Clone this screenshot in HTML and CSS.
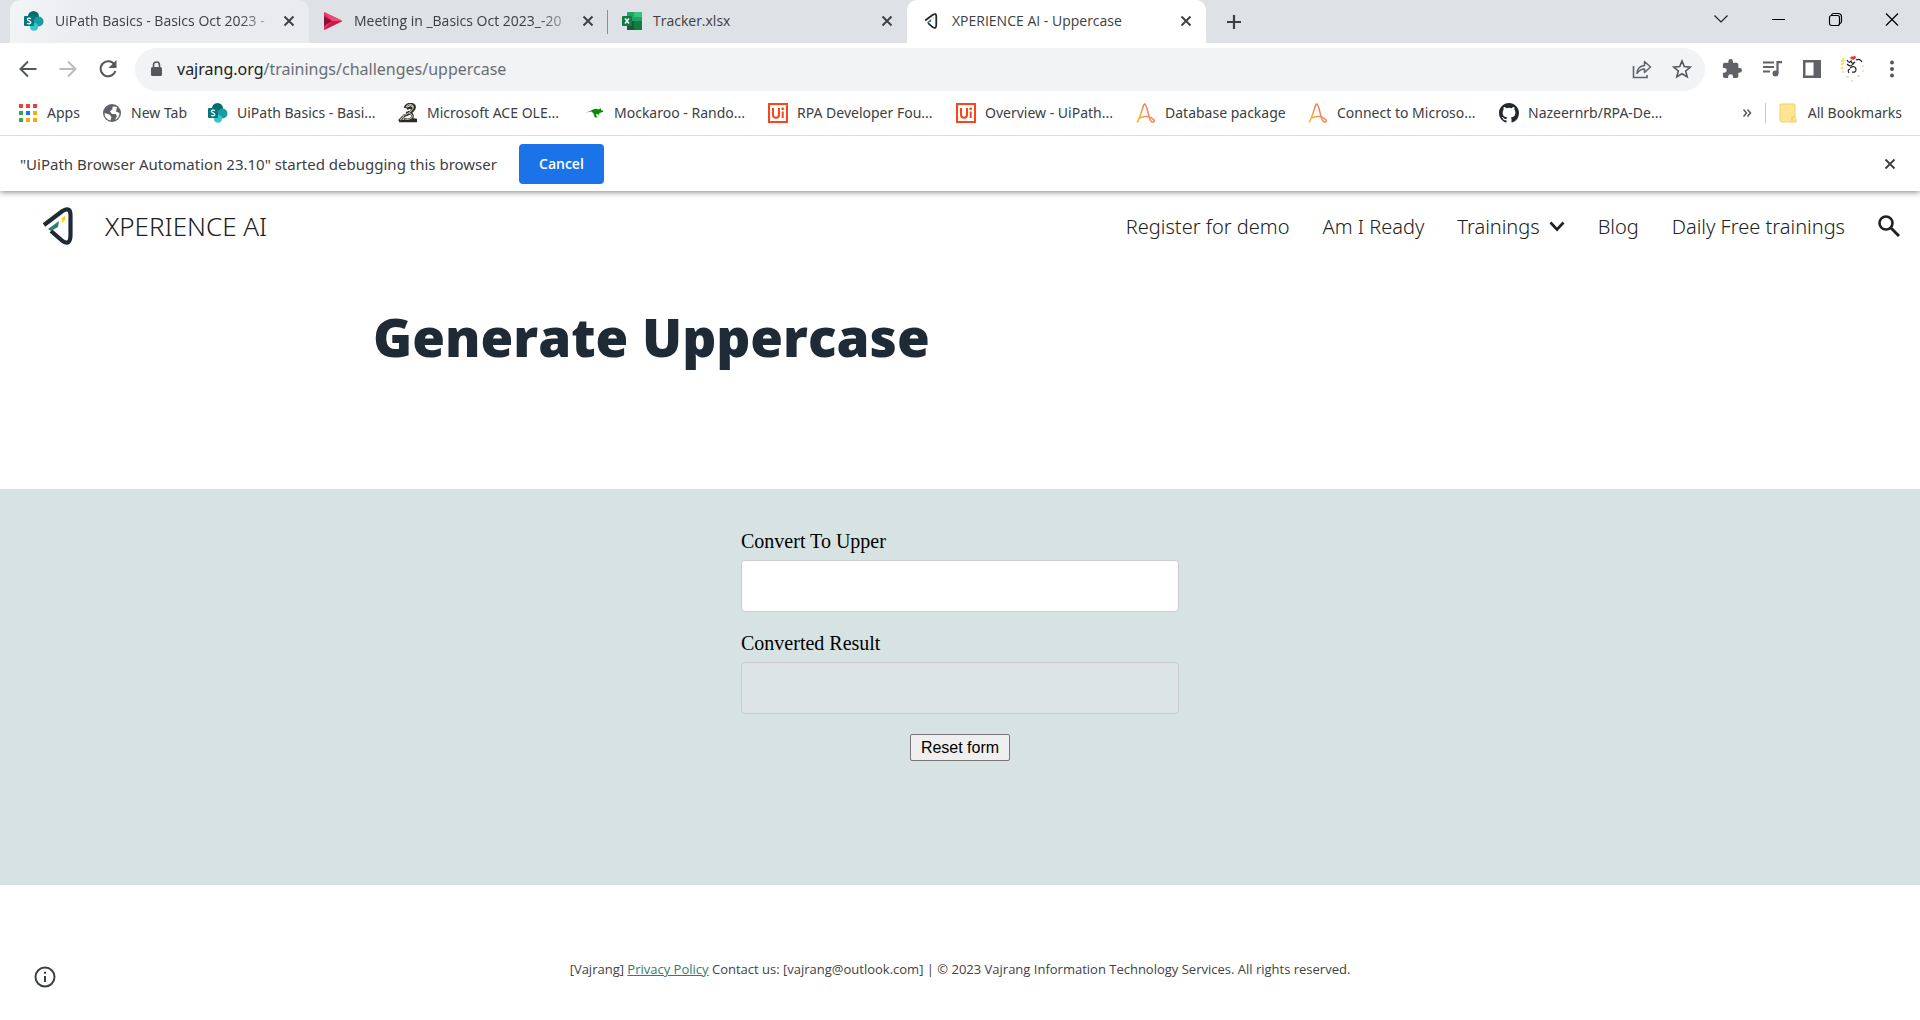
FILE: index.html
```html
<!DOCTYPE html>
<html lang="en">
<head>
<meta charset="utf-8">
<title>XPERIENCE AI - Uppercase</title>
<link rel="stylesheet" href="styles.css">
</head>
<body>
<svg class="defs" aria-hidden="true">
  <defs>
    <linearGradient id="accent" x1="0" y1="1" x2="1" y2="0"><stop offset="0" stop-color="#fdc300"/><stop offset=".5" stop-color="#f58a5b"/><stop offset="1" stop-color="#ee5a3c"/></linearGradient>
    <symbol id="sharepoint" viewBox="0 0 20 20"><circle cx="9.500" cy="5.500" r="5.500" fill="#036c70"/><circle cx="14.500" cy="10.500" r="5" fill="#1a9ba1"/><circle cx="10" cy="15.800" r="4" fill="#37c6d0"/><rect y="5" width="10" height="10" rx="1" fill="#03787c"/><path d="M6.900 7.600C5.500 6.800 3.300 7 3.400 8.500S6.800 9.900 6.800 11.500 4.200 13 3.100 12.200" fill="none" stroke="#fff" stroke-width="1.300"/></symbol>
    <symbol id="cross" viewBox="0 0 12 12"><path d="M1.500 1.500l9 9M10.500 1.500l-9 9" fill="none" stroke="currentColor" stroke-width="1.900"/></symbol>
    <symbol id="brand" viewBox="0 0 32 38"><path d="M2 18 20.500 4Q28.500-.5 28.500 8V28Q28.500 39 20.500 34L9 24" fill="none" stroke="#1f2a37" stroke-width="4.200" stroke-linejoin="round"/><path d="M6 22 17 14 16 20 9 24Z" fill="#2e7d73"/><path d="M20 11 23 9V13L20 16Z" fill="#fdd20a"/></symbol>
    <symbol id="uipath" viewBox="0 0 20 20"><path d="M1 1h18v18H1z" fill="#fff" stroke="#fa4616" stroke-width="2"/><path d="M5 5v6.500q0 3.300 3 3.300t3-3.300V5M14.700 8.500V15" fill="none" stroke="#fa4616" stroke-width="2"/><circle cx="14.700" cy="5.800" r="1.400" fill="#fa4616"/></symbol>
    <symbol id="actian" viewBox="0 0 20 20"><path d="M1 19.500C5 14 6.500 2 8.500 1 11 .5 12 13 14.500 17.500c1.600 2.500 5 1.500 3.500-.6-3-3.500-9.500-4.800-14.500-1.700" fill="none" stroke="url(#accent)" stroke-width="1.500"/></symbol>
  </defs>
</svg>

<header class="browser">
  <div class="tabs">
    <div class="tab tab--hover"><svg class="i20"><use href="#sharepoint"/></svg><span class="tab__title tab__title--fade">UiPath Basics - Basics Oct 2023 -</span><button class="plain" aria-label="Close tab"><svg class="i12"><use href="#cross"/></svg></button></div>
    <div class="tab tab--line"><svg class="i20" viewBox="0 0 20 20"><path d="M1 1 18 9q2 1 0 2L1 19Z" fill="#e8305f"/><path d="M1 1 19 10H9Z" fill="#ee4a76"/><path d="M1 19 9 10h10Z" fill="#c81c4d"/><path d="M1 5 9 10 1 15Z" fill="#8b1136"/></svg><span class="tab__title tab__title--fade">Meeting in _Basics Oct 2023_-20</span><button class="plain" aria-label="Close tab"><svg class="i12"><use href="#cross"/></svg></button></div>
    <div class="tab"><svg class="i20" viewBox="0 0 20 20"><rect x="5" y="1" width="15" height="18" rx="1" fill="#21a366"/><path d="M12 1h7q1 0 1 1v4h-8z" fill="#33c481"/><path d="M5 10h8v9H6q-1 0-1-1z" fill="#185c37"/><path d="M12 10h8v8q0 1-1 1h-7z" fill="#107c41"/><rect y="5" width="10" height="10" rx="1" fill="#107c41"/><path d="M3 7.500l4 5M7 7.500l-4 5" stroke="#fff" stroke-width="1.500"/></svg><span class="tab__title">Tracker.xlsx</span><button class="plain" aria-label="Close tab"><svg class="i12"><use href="#cross"/></svg></button></div>
    <div class="tab tab--active"><svg class="i20 tab__brand"><use href="#brand"/></svg><span class="tab__title">XPERIENCE AI - Uppercase</span><button class="plain" aria-label="Close tab"><svg class="i12"><use href="#cross"/></svg></button></div>
    <button class="plain tabs__new" aria-label="New tab"><svg class="i16" viewBox="0 0 16 16"><path d="M8 1v14M1 8h14" stroke="#3c4043" stroke-width="2.200"/></svg></button>
    <div class="window">
      <button class="plain" aria-label="Search tabs"><svg class="i16" viewBox="0 0 16 16"><path d="M1.500 4.500 8 11l6.500-6.500" fill="none" stroke="#222" stroke-width="1.200"/></svg></button>
      <button class="plain" aria-label="Minimize"><svg class="i16" viewBox="0 0 16 16"><path d="M2 8.500h13" stroke="#000"/></svg></button>
      <button class="plain" aria-label="Restore"><svg class="i16" viewBox="0 0 16 16"><rect x="2.500" y="4.500" width="10" height="10" rx="2" fill="none" stroke="#000" stroke-width="1.200"/><path d="M4.500 4Q5 2.500 7 2.500H11Q14.500 2.500 14.500 6v4.500Q14.500 12 13 12.500" fill="none" stroke="#000" stroke-width="1.200"/></svg></button>
      <button class="plain" aria-label="Close"><svg class="i16" viewBox="0 0 16 16"><path d="M2 2.500l12 12M14 2.500l-12 12" stroke="#000" stroke-width="1.200"/></svg></button>
    </div>
  </div>

  <div class="toolbar">
    <div class="toolbar__nav">
      <button class="plain" aria-label="Back"><svg class="i20" viewBox="0 0 20 20"><path d="M18.500 10H3M10 2.500 2.500 10l7.500 7.500" fill="none" stroke="#54575b" stroke-width="2"/></svg></button>
      <button class="plain" aria-label="Forward"><svg class="i20" viewBox="0 0 20 20"><path d="M1.500 10H17M10 2.500l7.500 7.500-7.500 7.500" fill="none" stroke="#babcbe" stroke-width="2"/></svg></button>
      <button class="plain" aria-label="Reload"><svg class="i20" viewBox="0 0 20 20"><path d="M16.300 5.500A7.500 7.500 0 1 0 17.300 12" fill="none" stroke="#54575b" stroke-width="2"/><path d="M18.500 1v8h-8z" fill="#54575b"/></svg></button>
    </div>
    <div class="omnibox">
      <svg class="i16" viewBox="0 0 16 16"><rect x="3" y="6" width="11" height="9" rx="1.500" fill="#54575b"/><path d="M5.500 6V4a3 3 0 0 1 6 0v2" fill="none" stroke="#54575b" stroke-width="1.600"/></svg>
      <span class="omnibox__url"><b>vajrang.org</b>/trainings/challenges/uppercase</span>
      <button class="plain" aria-label="Share"><svg class="i20" viewBox="0 0 20 20"><path d="M1.500 7v11.500h13.500V16" fill="none" stroke="#5f6368" stroke-width="1.600"/><path d="M5 14.500q.5-7.500 7.500-8V2.500L18.500 8l-6 5.500V10Q8 10 5 14.500z" fill="none" stroke="#5f6368" stroke-width="1.500" stroke-linejoin="round"/></svg></button>
      <button class="plain" aria-label="Bookmark this page"><svg class="i20" viewBox="0 0 20 20"><path d="M10 2l2.300 5.600 6 .5-4.600 3.900 1.500 5.900L10 14.700l-5.200 3.200L6.300 12 1.700 8.100l6-.5z" fill="none" stroke="#54575b" stroke-width="1.600"/></svg></button>
    </div>
    <div class="toolbar__tools">
      <button class="plain" aria-label="Extensions"><svg class="i20" viewBox="1 1 22 22"><path fill="#5f6368" d="M20.500 11H19V7a2 2 0 0 0-2-2h-4V3.500a2.500 2.500 0 0 0-5 0V5H4a2 2 0 0 0-2 2v3.800h1.500a2.700 2.700 0 0 1 0 5.400H2V20a2 2 0 0 0 2 2h3.800v-1.500a2.700 2.700 0 0 1 5.400 0V22H17a2 2 0 0 0 2-2v-4h1.500a2.500 2.500 0 0 0 0-5z"/></svg></button>
      <button class="plain" aria-label="Media"><svg class="i20" viewBox="0 0 20 20"><path d="M1 3.500h11M1 8h11M1 12.500h7" stroke="#5f6368" stroke-width="2"/><path d="M15.500 14V3.200H20" fill="none" stroke="#5f6368" stroke-width="2.200"/><circle cx="13.500" cy="14.500" r="3" fill="#5f6368"/></svg></button>
      <button class="plain" aria-label="Side panel"><svg class="i20" viewBox="0 0 20 20"><path fill="#5f6368" fill-rule="evenodd" d="M1 1h18v18H1zM3.500 3.500v13h8v-13z"/></svg></button>
      <button class="plain" aria-label="Profile"><svg class="i28" viewBox="0 0 28 28"><path d="M9 5q2 4 4 1 1 4 4 1M9 9q4 4 7-1M18 5q4-2 6 2M12 13q5-3 6 1 0 4-4 3M11 18q-2-3 1-4" fill="none" stroke="#222" stroke-width="1.200"/><path d="M12 3q2-3 3-1 2-3 3 1l-3 2z" fill="#ef2b2d"/><path d="M3 6h3M3 10l3-2M5 3l1 3M3 13h2" stroke="#f5e53a" stroke-width="1.800"/><path d="M4 17h2M8 22h3M13 26h2M19 21h3M24 16h2M24 11h2" stroke="#d6e3ba" stroke-width="1.500"/></svg></button>
      <button class="plain" aria-label="Menu"><svg class="i20" viewBox="0 0 20 20" fill="#54575b"><circle cx="10" cy="3.500" r="2"/><circle cx="10" cy="10" r="2"/><circle cx="10" cy="16.500" r="2"/></svg></button>
    </div>
  </div>

  <nav class="bookmarks" aria-label="Bookmarks">
    <a href="#"><svg class="i20" viewBox="0 0 20 20"><path d="M1 1h4v4H1zM8 1h4v4H8zM15 1h4v4h-4z" fill="#ea4335"/><path d="M1 8h4v4H1zM1 15h4v4H1z" fill="#34a853"/><path d="M8 8h4v4H8z" fill="#1a73e8"/><path d="M15 8h4v4h-4zM8 15h4v4H8zM15 15h4v4h-4z" fill="#fbaa05"/></svg>Apps</a>
    <a href="#"><svg class="i20" viewBox="0 0 20 20"><circle cx="10" cy="10" r="9" fill="#5f6368"/><path d="M11 3.500q-1 1-.5 2.500L8 8.500l2 2.500h3.500L15 13l-2 4Q17.500 15 17.500 10L14 8.500l1-4.500zM2.500 10l5 1.500 2 2.500-1 3.500Q2.500 16 2.500 10z" fill="#fff"/></svg>New Tab</a>
    <a href="#"><svg class="i20"><use href="#sharepoint"/></svg>UiPath Basics - Basi...</a>
    <a href="#"><svg class="i20" viewBox="0 0 20 20"><path d="M7 5q1-4 6-4 5 1 3 5-3 5-11 7M9 6q4-3 5 0 0 4-6 4M10 9q6 2 4 6-3 3-8 1M1 18h18M1 18l5-5M13 16l6 1" fill="none" stroke="#2d2a26" stroke-width="2.600"/><path d="M8 4q2-3 5-2.500 3 1 2 4-3 5-10 7M11 10q5 2 2.500 5-3 2-7 1M2 17l4-4" fill="none" stroke="#b5afa1" stroke-width="1.200"/></svg>Microsoft ACE OLE...</a>
    <a href="#"><svg class="i20" viewBox="0 0 20 20"><path d="M1 9.500Q5 8.500 8 6.500q3-1.500 6 0l1.500-1.500.7 2 2.300 1-1 1-3 1-.7 2.500-1-1.500-2 .5 1.500 3h-2.500l-1.300-4-2-2Q4 8.800 1 9.500z" fill="#0a8a0a"/></svg>Mockaroo - Rando...</a>
    <a href="#"><svg class="i20"><use href="#uipath"/></svg>RPA Developer Fou...</a>
    <a href="#"><svg class="i20"><use href="#uipath"/></svg>Overview - UiPath...</a>
    <a href="#"><svg class="i20"><use href="#actian"/></svg>Database package</a>
    <a href="#"><svg class="i20"><use href="#actian"/></svg>Connect to Microso...</a>
    <a href="#"><svg class="i20" viewBox="0 0 16 16"><path fill="#24292f" d="M8 0C3.580 0 0 3.580 0 8c0 3.540 2.290 6.530 5.470 7.590.4.070.55-.17.55-.38 0-.19-.01-.82-.01-1.490-2.010.37-2.530-.49-2.690-.94-.09-.23-.48-.94-.82-1.130-.28-.15-.68-.52-.01-.53.63-.01 1.080.58 1.230.82.72 1.210 1.870.87 2.330.66.07-.52.28-.87.51-1.070-1.780-.2-3.640-.89-3.640-3.950 0-.87.31-1.590.82-2.150-.08-.2-.36-1.020.08-2.120 0 0 .67-.21 2.200.82a7.600 7.600 0 0 1 4 0c1.530-1.040 2.200-.82 2.200-.82.44 1.100.16 1.920.08 2.120.51.56.82 1.270.82 2.150 0 3.070-1.870 3.750-3.650 3.950.29.25.54.73.54 1.480 0 1.070-.01 1.930-.01 2.200 0 .21.15.46.55.38A8 8 0 0 0 16 8c0-4.420-3.580-8-8-8z"/></svg>Nazeernrb/RPA-De...</a>
    <div class="bookmarks__end">
      <button class="plain" aria-label="More bookmarks"><svg class="i12" viewBox="0 0 12 12"><path d="M2.500 2.500l3 3.500-3 3.500M6.500 2.500l3 3.500-3 3.500" fill="none" stroke="#54575b" stroke-width="1.500"/></svg></button>
      <a class="bookmarks__all" href="#"><svg class="i20" viewBox="0 0 20 20"><path d="M4 1h12q1 0 1 1v13l1 1v3H4q-2 0-2-2V2q0-1 2-1z" fill="#ffe591" stroke="#f0cf62"/><path d="M14 18v-4h3" fill="none" stroke="#f0c740"/></svg>All Bookmarks</a>
    </div>
  </nav>

  <div class="infobar">
    <span>"UiPath Browser Automation 23.10" started debugging this browser</span>
    <button class="infobar__cancel">Cancel</button>
    <button class="plain infobar__close" aria-label="Dismiss"><svg class="i12"><use href="#cross"/></svg></button>
  </div>
</header>

<div class="site">
  <header class="site__header">
    <a class="site__home" href="#"><svg class="site__logo"><use href="#brand"/></svg>XPERIENCE AI</a>
    <nav class="menu" aria-label="Site">
      <a href="#">Register for demo</a>
      <a href="#">Am I Ready</a>
      <a href="#">Trainings <svg class="i16" viewBox="0 0 16 16"><path d="M1.500 4.500 8 11.500l6.500-7" fill="none" stroke="#212121" stroke-width="2.600"/></svg></a>
      <a href="#">Blog</a>
      <a href="#">Daily Free trainings</a>
      <button class="plain" aria-label="Search"><svg class="i22" viewBox="0 0 22 22"><circle cx="8" cy="8" r="6.500" fill="none" stroke="#212121" stroke-width="2.600"/><path d="M13 13l8 8" stroke="#212121" stroke-width="3"/></svg></button>
    </nav>
  </header>
  <main>
    <h1 class="title">Generate Uppercase</h1>
    <section class="band">
      <form class="form">
        <label for="source">Convert To Upper</label>
        <input id="source" type="text">
        <label for="result">Converted Result</label>
        <input id="result" type="text" disabled>
        <button class="form__reset" type="reset">Reset form</button>
      </form>
    </section>
  </main>
  <footer class="footer">
    <button class="plain footer__info" aria-label="Site information"><svg class="i22" viewBox="0 0 22 22"><circle cx="11" cy="11" r="9.500" fill="none" stroke="#3c4043" stroke-width="2"/><path d="M11 10v6M11 5.800v2" stroke="#3c4043" stroke-width="2"/></svg></button>
    <p>[Vajrang] <a href="#">Privacy Policy</a> Contact us: [vajrang@outlook.com] | © 2023 Vajrang Information Technology Services. All rights reserved.</p>
  </footer>
</div>
</body>
</html>
```
FILE: styles.css
```css
* { box-sizing: border-box; }
body { margin: 0; background: #fff; color: #3c4043; font-family: "Noto Sans", "Open Sans", sans-serif; font-size: 14px; }
a { color: inherit; text-decoration: none; }
svg { display: block; flex: none; }
.defs { position: absolute; width: 0; height: 0; }
.plain { display: flex; align-items: center; justify-content: center; padding: 0; border: 0; background: none; color: inherit; }
.i12 { width: 12px; height: 12px; }
.i16 { width: 16px; height: 16px; }
.i20 { width: 20px; height: 20px; }
.i22 { width: 22px; height: 22px; }
.i28 { width: 28px; height: 28px; }

.browser { position: relative; box-shadow: 0 1px 6px rgba(0, 0, 0, .5); }
.tabs { display: flex; height: 43px; padding-left: 10px; background: #dee1e6; }
.tab { display: flex; flex: 0 1 299px; min-width: 0; align-items: center; gap: 11px; padding: 0 14px 2px; border-radius: 10px 10px 0 0; font-family: "Open Sans", sans-serif; }
.tab--hover { background: linear-gradient(100deg, #f3f4f6, #e9ebee 30%); }
.tab--active { background: #fff; }
.tab--line { border-radius: 0; background: linear-gradient(#8c9095, #8c9095) right center / 1px 24px no-repeat; }
.tab__title { flex: 1; white-space: nowrap; }
.tab__title--fade { -webkit-mask-image: linear-gradient(90deg, #000 85%, rgba(0, 0, 0, .2)); mask-image: linear-gradient(90deg, #000 85%, rgba(0, 0, 0, .2)); }
.tab__brand { padding: 2px; }
.tabs__new { margin-left: 20px; }
.window { display: flex; margin-left: auto; height: 37px; }
.window button { width: 57px; }

.toolbar { display: flex; align-items: center; height: 51px; padding: 1px 18px 0; }
.toolbar__nav { display: flex; gap: 20px; width: 117px; }
.omnibox { display: flex; flex: 1; align-items: center; gap: 13px; height: 43px; padding: 0 13px; border-radius: 22px; background: #f1f3f4; }
.omnibox__url { flex: 1; color: #6a6e73; font-size: 16px; }
.omnibox__url b { color: #202124; font-weight: 400; }
.omnibox button + button { margin-left: 7px; }
.toolbar__tools { display: flex; align-items: center; gap: 20px; padding-left: 17px; }
.toolbar__tools button { width: 20px; }

.bookmarks { display: grid; grid-template-columns: 84px 106px 190px 187px 183px 188px 180px 172px 191px 190px 1fr; align-items: center; height: 42px; padding: 0 18px 4px; border-bottom: 1px solid #dadce0; white-space: nowrap; }
.bookmarks a { display: flex; align-items: center; gap: 9px; }
.bookmarks__end { display: flex; justify-content: flex-end; gap: 12px; }
.bookmarks .bookmarks__all { gap: 10px; padding-left: 12px; border-left: 1px solid #c6c9cd; }

.infobar { display: flex; align-items: center; gap: 22px; height: 55px; padding: 0 24px 0 20px; font-size: 15px; }
.infobar__cancel { width: 85px; height: 40px; border: 0; border-radius: 4px; background: #1a73e8; color: #fff; font: 600 14px "Open Sans", sans-serif; }
.infobar__close { margin-left: auto; }

.site { color: #212121; font-family: "Open Sans", sans-serif; }
.site__header { display: flex; align-items: center; justify-content: space-between; height: 70px; padding: 0 20px 0 42px; font-family: "Noto Sans", sans-serif; font-weight: 300; }
.site__home { display: flex; align-items: center; gap: 31px; font-size: 26px; }
.site__logo { width: 32px; height: 38px; }
.menu { display: flex; align-items: center; gap: 33px; font-size: 20px; }
.menu a { display: flex; align-items: center; gap: 9px; }
.title { width: 1174px; max-width: 100%; margin: 0 auto; padding: 36px 0 112px; color: #1f2a37; font: 800 53px/80px "Open Sans", sans-serif; }
.band { display: flex; justify-content: center; padding: 40px 0 124px; background: #d7e3e2; }
.form { display: flex; flex-direction: column; width: 438px; font: 20px/24px "Liberation Serif", serif; color: #000; }
.form label { margin-bottom: 7px; }
.form input { height: 52px; margin-bottom: 19px; padding: 0 12px; border: 1px solid #ccc; border-radius: 4px; background: #fff; font: inherit; }
.form input:disabled { background: #dce4e5; }
.form__reset { align-self: center; width: 100px; height: 27px; margin-top: 1px; padding: 0; border: 1px solid #767676; border-radius: 2px; background: #efefef; color: #000; font: 16px "Liberation Sans", sans-serif; }
.footer { position: relative; display: flex; justify-content: center; padding: 74px 0 40px; font-size: 13px; line-height: 20px; color: #424242; }
.footer p { margin: 0; }
.footer p a { color: #2e7d73; text-decoration: underline; }
.footer__info { position: absolute; left: 34px; bottom: 31px; }
```
